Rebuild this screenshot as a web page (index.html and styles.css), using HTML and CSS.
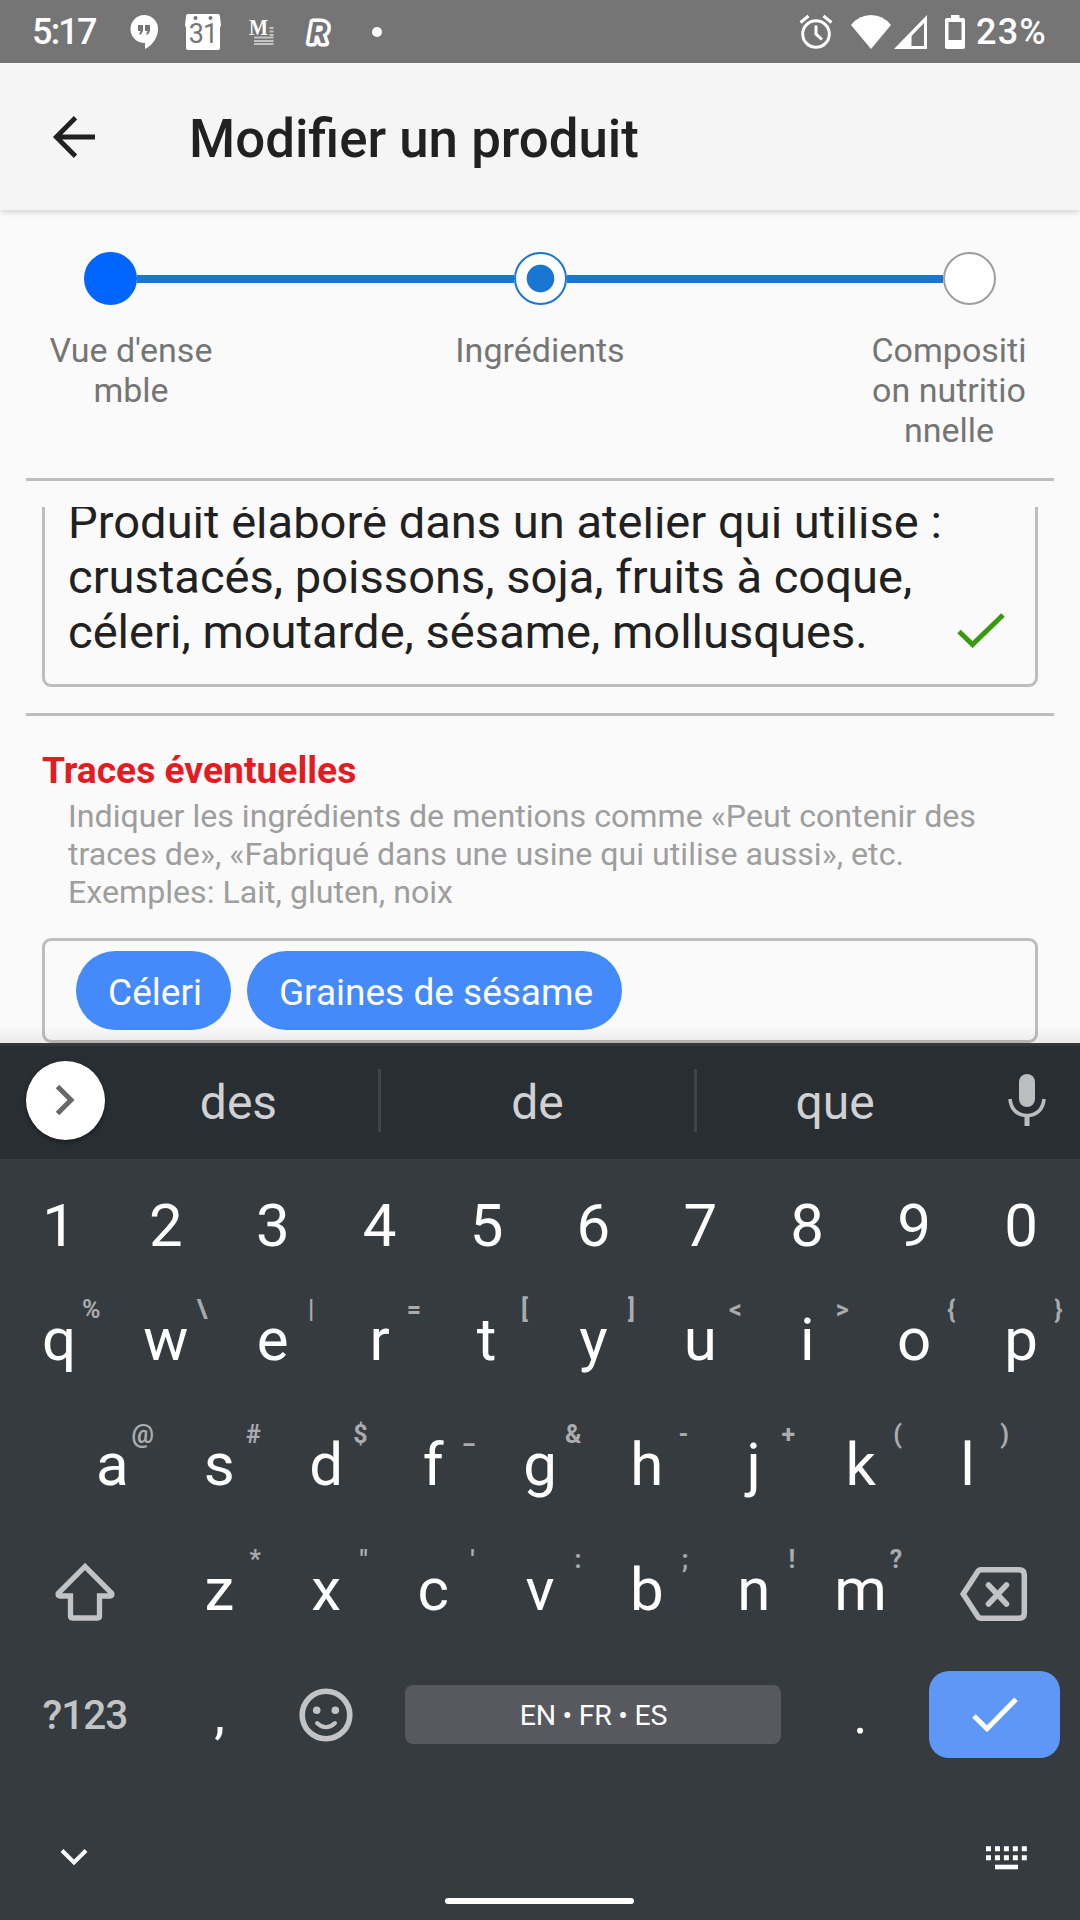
FILE: index.html
```html
<!DOCTYPE html>
<html lang="fr">
<head>
<meta charset="utf-8">
<title>Modifier un produit</title>
<link rel="stylesheet" href="styles.css">
</head>
<body>
<div class="screen">
  <header class="status">
    <span class="clock">5:17</span>
    <svg class="st-chat" width="30" height="36" viewBox="0 0 30 36"><path fill="#fff" d="M15 1a14 14 0 0 1 14 14c0 9-6 16.500-13 20v-6A14 14 0 1 1 15 1z"/><path fill="#757575" d="M9 11h5v6l-2 3.500h-2L11.500 17H9zM16 11h5v6l-2 3.500h-2l1.500-3.500H16z"/></svg>
    <svg class="st-cal" width="36" height="38" viewBox="0 0 36 38"><path fill="#fff" d="M3 1h30q2 0 2 3l1 8-1 3v20q0 2-2 2H3q-2 0-2-2V15l-1-3 1-8q0-3 2-3z"/><circle cx="10.500" cy="5" r="2" fill="#757575"/><circle cx="25.500" cy="5" r="2" fill="#757575"/><text x="18" y="29.500" text-anchor="middle" class="cal-day">31</text></svg>
    <svg class="st-m" width="26" height="26" viewBox="0 0 26 26"><text x="0" y="15.500" class="m-letter" textLength="19" lengthAdjust="spacingAndGlyphs">M</text><path stroke="#c3c3c3" stroke-width="2" d="M20.500 9h4M20.500 12.500h4M20.500 16h4M5 18.500h19.500M5 22h19.500M5 25h19.500"/></svg>
    <svg class="st-r" width="27" height="32" viewBox="0 0 27 32"><text x="4" y="27" class="r-letter r-outline">R</text><text x="4" y="27" class="r-letter r-fill">R</text></svg>
    <i class="st-dot"></i>
    <svg class="st-alarm" width="34" height="36" viewBox="0 0 34 36" fill="none" stroke="#fff" stroke-width="3"><circle cx="17" cy="20" r="13.300"/><path d="M17 11.500V20l6 5.500M1.500 8.500l8-6.500M32.500 8.500l-8-6.500"/></svg>
    <svg class="st-wifi" width="40" height="34" viewBox="0 0 40 34"><path fill="#fff" d="M20 34 0 10Q8 0 20 0t20 10z"/></svg>
    <svg class="st-sig" width="34" height="34" viewBox="0 0 34 34"><path fill="#fff" fill-rule="evenodd" d="M0 34 33 0v34zM17.500 21v10H30V8z"/></svg>
    <svg class="st-batt" width="20" height="36" viewBox="0 0 20 36"><path fill="#fff" fill-rule="evenodd" d="M6 1h8.500v3H18q2 0 2 2v27q0 2-2 2H2q-2 0-2-2V6q0-2 2-2h4zM3.500 8v18h13V8z"/></svg>
    <span class="percent">23%</span>
  </header>

  <div class="appbar">
    <svg width="42" height="42" viewBox="0 0 42 42" fill="none" stroke="#212121" stroke-width="4.800"><path d="M42 21H4M22.500 1.700 3.300 21l19.200 19.300"/></svg>
    <h1>Modifier un produit</h1>
  </div>

  <section class="stepper">
    <div class="track">
      <i class="step done"></i><i class="bar"></i><i class="step current"></i><i class="bar"></i><i class="step"></i>
    </div>
    <div class="labels">
      <span>Vue d'ense<br>mble</span>
      <span>Ingrédients</span>
      <span>Compositi<br>on nutritio<br>nnelle</span>
    </div>
  </section>
  <hr class="rule">

  <main class="form">
    <div class="field">
      <p>Produit élaboré dans un atelier qui utilise :<br>crustacés, poissons, soja, fruits à coque,<br>céleri, moutarde, sésame, mollusques.</p>
      <svg width="48" height="36" viewBox="0 0 48 36" fill="none" stroke="#39990f" stroke-width="5"><path d="M2 18.500l13.500 13L46 2"/></svg>
    </div>
    <hr class="rule second">
    <h2>Traces éventuelles</h2>
    <p class="hint">Indiquer les ingrédients de mentions comme «Peut contenir des<br>traces de», «Fabriqué dans une usine qui utilise aussi», etc.<br>Exemples: Lait, gluten, noix</p>
    <div class="chips"><span class="chip">Céleri</span><span class="chip wide">Graines de sésame</span></div>
  </main>

  <section class="keyboard">
    <div class="suggest">
      <div class="more"><svg width="22" height="32" viewBox="0 0 22 32" fill="none" stroke="#686868" stroke-width="5"><path d="M2.500 2.500 16 16 2.500 29.500"/></svg></div>
      <span class="s1">des</span><i></i><span class="s2">de</span><i></i><span class="s3">que</span>
      <svg class="mic" width="38" height="52" viewBox="0 0 38 52"><rect x="11" y="0" width="16" height="33" rx="8" fill="#bcbdbf"/><path fill="none" stroke="#bcbdbf" stroke-width="3.600" d="M2 25c1 11 8 16.500 17 16.500S35 36 36 25"/><path stroke="#bcbdbf" stroke-width="5" d="M19 41v11"/></svg>
    </div>
    <div class="row digits"><b>1</b><b>2</b><b>3</b><b>4</b><b>5</b><b>6</b><b>7</b><b>8</b><b>9</b><b>0</b></div>
    <div class="row"><b>q<sup>%</sup></b><b>w<sup>\</sup></b><b>e<sup>|</sup></b><b>r<sup>=</sup></b><b>t<sup>[</sup></b><b>y<sup>]</sup></b><b>u<sup>&lt;</sup></b><b>i<sup>&gt;</sup></b><b>o<sup>{</sup></b><b>p<sup>}</sup></b></div>
    <div class="row"><b>a<sup>@</sup></b><b>s<sup>#</sup></b><b>d<sup>$</sup></b><b>f<sup>_</sup></b><b>g<sup>&amp;</sup></b><b>h<sup>-</sup></b><b>j<sup>+</sup></b><b>k<sup>(</sup></b><b>l<sup>)</sup></b></div>
    <div class="row">
      <div class="side shift"><svg width="60" height="60" viewBox="0 0 60 60" fill="none" stroke="#c2c3c5" stroke-width="5.300"><path d="M30 4.500 3.200 31.500q-.8 2.500 2 2.500h10.300v20q0 2 2 2h25q2 0 2-2V34h10.300q2.800 0 2-2.500z"/></svg></div>
      <b>z<sup>*</sup></b><b>x<sup>"</sup></b><b>c<sup>'</sup></b><b>v<sup>:</sup></b><b>b<sup>;</sup></b><b>n<sup>!</sup></b><b>m<sup>?</sup></b>
      <div class="side delete"><svg width="68" height="54" viewBox="0 0 68 54" fill="none" stroke="#c2c3c5" stroke-width="5.500"><path d="M21 2.800h38q5.300 0 5.300 5v38.400q0 5-5.300 5H21q-2 0-3.300-2L3.200 27 17.700 4.800q1.300-2 3.300-2z"/><path stroke-linecap="round" d="M28.500 18l18 19M46.500 18l-18 19"/></svg></div>
    </div>
    <div class="row">
      <div class="side sym">?123</div><b class="punct">,</b>
      <div class="key"><svg width="54" height="54" viewBox="0 0 54 54"><circle cx="27" cy="27" r="23.800" fill="none" stroke="#c2c3c5" stroke-width="5.600"/><circle cx="17.700" cy="22.300" r="3.800" fill="#c2c3c5"/><circle cx="36.300" cy="22.300" r="3.800" fill="#c2c3c5"/><path d="M18 35q9 8.500 18 0" fill="none" stroke="#c2c3c5" stroke-width="4" stroke-linecap="round"/></svg></div>
      <div class="space">EN • FR • ES</div><b class="punct">.</b>
      <div class="enter"><svg width="46" height="36" viewBox="0 0 46 36" fill="none" stroke="#fff" stroke-width="5"><path d="M2 19l13 12.800L44 2.300"/></svg></div>
    </div>
    <nav>
      <svg width="28" height="18" viewBox="0 0 28 18" fill="none" stroke="#fff" stroke-width="4"><path d="M2 2.500l12 12 12-12"/></svg>
      <i class="pill"></i>
      <svg class="switcher" width="41" height="24" viewBox="0 0 41 24" fill="none" stroke="#fff"><path stroke-width="5" stroke-dasharray="5 3.950" d="M0 2.800h41M0 11.800h41"/><path stroke-width="4.600" d="M9 21h23"/></svg>
    </nav>
  </section>
</div>
</body>
</html>
```
FILE: styles.css
```css
* { box-sizing: border-box; margin: 0; padding: 0; }
body { background: #fafafa; font-family: Roboto, "Liberation Sans", sans-serif; }
svg { display: block; flex: none; overflow: visible; }
.screen { width: 1080px; height: 1920px; overflow: hidden; display: flex; flex-direction: column; }

.status { height: 63px; flex: none; background: #757575; color: #fff; display: flex; align-items: center; padding-left: 32px; font-size: 36px; font-weight: 500; line-height: 66px; }
.clock { width: 97px; letter-spacing: -1.800px; padding-top: 1px; }
.st-cal { margin-left: 26px; }
.st-m { margin-left: 28px; }
.st-r { margin-left: 30px; }
.cal-day { font: 400 27px Roboto, sans-serif; fill: #757575; letter-spacing: -1px; }
.m-letter { font: 700 23px "Liberation Serif", serif; fill: #fff; }
.r-letter { font: italic 700 30px Roboto, sans-serif; stroke-linejoin: round; }
.r-outline { fill: #fff; stroke: #fff; stroke-width: 7px; }
.r-fill { fill: #757575; }
.st-dot { width: 10px; height: 10px; border-radius: 50%; background: #fff; margin-left: 40px; }
.st-alarm { margin-left: 417px; }
.st-wifi { margin-left: 18px; }
.st-sig { margin-left: 3px; }
.st-batt { margin-left: 17px; }
.percent { margin-left: 11px; letter-spacing: 1.200px; padding-top: 1px; }

.appbar { height: 147px; flex: none; background: #f5f5f5; display: flex; align-items: center; padding-left: 53px; gap: 94px; box-shadow: 0 2px 6px rgba(0, 0, 0, .16); }
.appbar h1 { font-size: 52.800px; font-weight: 500; color: #212121; line-height: 62px; padding-top: 5px; white-space: nowrap; }

.stepper { height: 268px; flex: none; padding-top: 42px; }
.track { display: flex; align-items: center; padding: 0 84px; height: 53px; }
.step { width: 53px; height: 53px; flex: none; border-radius: 50%; border: 2px solid #9e9e9e; background: #fff; }
.step.done { background: #06f; border-color: #06f; }
.step.current { border-color: #1976d2; background: radial-gradient(circle, #1976d2 13.300px, #fff 14.300px); }
.bar { flex: 1; height: 8px; background: #1976d2; }
.labels { display: grid; grid-template-columns: 178px 1fr 178px; padding: 25px 42px 0; font-size: 34px; line-height: 40px; color: #757575; text-align: center; white-space: nowrap; }
.rule { flex: none; height: 3px; border: 0; background: #bdbdbd; margin: 0 26px; }

.form { margin-top: 26px; height: 536px; flex: none; overflow: hidden; position: relative; }
.form::after { content: ""; position: absolute; left: 0; right: 0; bottom: 0; height: 18px; background: linear-gradient(transparent, rgba(0, 0, 0, .06)); }
.field { margin: -40px 42px 0; height: 220px; border: 3px solid #bdbdbd; border-radius: 9px; padding: 24px 0 0 23px; display: flex; color: #212121; }
.field p { font-size: 47.100px; line-height: 55px; width: 889px; flex: none; white-space: nowrap; }
.field svg { margin-top: 119px; }
.second { margin-top: 26px; }
.form h2 { margin: 33px 0 0 42px; font-size: 37.200px; line-height: 42px; font-weight: 700; color: #e41b23; }
.hint { margin: 6px 0 0 68px; font-size: 32.170px; line-height: 38px; color: #9e9e9e; white-space: nowrap; }
.chips { margin: 27px 42px 0; height: 105px; border: 3px solid #bdbdbd; border-radius: 9px; padding: 10px 31px; display: flex; gap: 16px; }
.chip { height: 79px; width: 155px; border-radius: 40px; background: #448afb; color: #fff; font-size: 37px; line-height: 84px; padding-left: 3px; text-align: center; white-space: nowrap; }
.chip.wide { width: 375px; }

.keyboard { flex: 1; background: #363b3f; color: #fff; position: relative; }
.suggest { height: 116px; background: #292e32; border-top: 3px solid #34393c; display: flex; align-items: center; padding-left: 26px; color: #d0d1d3; font-size: 48px; line-height: 60px; text-align: center; }
.more { width: 79px; height: 79px; margin-bottom: 5px; border-radius: 50%; background: #fff; display: grid; place-items: center; box-shadow: 0 2px 4px rgba(0, 0, 0, .4); }
.suggest i { width: 3px; height: 63px; margin-bottom: 5px; background: #404347; }
.s1 { width: 273px; padding-right: 6px; }
.s2 { width: 313px; }
.s3 { width: 276px; margin-right: 35px; }
.mic { margin-bottom: 5px; }

.row { height: 125px; display: flex; justify-content: center; align-items: center; }
.row b { width: 106.900px; height: 125px; position: relative; font-weight: 400; font-size: 60px; line-height: 125px; text-align: center; }
.row sup { position: absolute; right: 12px; top: 18px; font-size: 25px; line-height: 30px; font-weight: 700; color: #a9abae; }
.digits { height: 118px; padding-top: 15px; }
.digits b { height: 103px; line-height: 103px; }
.row .punct { font-size: 54px; }
.side { width: 160.500px; display: grid; place-items: center; }
.shift { padding: 4px 2px 0 0; }
.delete { padding-top: 9px; }
.key { width: 106.900px; display: grid; place-items: center; }
.sym { font-size: 40.500px; letter-spacing: -1px; padding-right: 2px; font-weight: 500; color: #c2c3c5; }
.space { width: 376px; height: 59px; margin: 0 25.500px; border-radius: 8px; background: #57595e; font-size: 28.500px; letter-spacing: -.25px; line-height: 61px; text-align: center; }
.enter { width: 131px; height: 87px; margin: 0 14px 0 15.500px; border-radius: 20px; background: #5f97f6; display: grid; place-items: center; }
nav { height: 143px; display: flex; justify-content: space-between; padding: 71px 53px 0 60px; }
.pill { width: 189px; height: 6px; border-radius: 3px; background: #fff; margin: 50px 0 0 5px; }
.switcher { margin-top: -2px; }
```
